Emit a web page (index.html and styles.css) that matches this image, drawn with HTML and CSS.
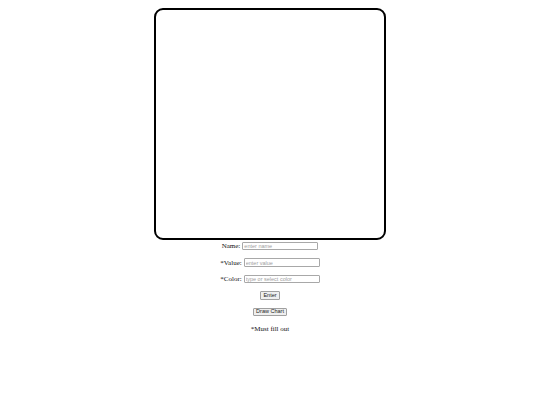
FILE: index.html
```html
<!DOCTYPE html>
<html>
<head>
<meta charset="utf-8">
<link rel="stylesheet" href="styles.css">
</head>
<body>
<div class="chart"></div>
<form class="form">
  <div class="row"><label class="lbl">Name:</label><input class="field" type="text" placeholder="enter name"></div>
  <div class="row"><label class="lbl">*Value:</label><input class="field" type="text" placeholder="enter value"></div>
  <div class="row"><label class="lbl">*Color:</label><input class="field" type="text" placeholder="type or select color"></div>
  <div class="row"><button class="btn" type="button">Enter</button></div>
  <div class="row"><button class="btn" type="button">Draw Chart</button></div>
  <div class="row"><span class="note">*Must fill out</span></div>
</form>
</body>
</html>
```
FILE: styles.css
```css
html, body {
  background: #ffffff;
}
body {
  margin: 8px;
  font-family: "Liberation Serif", "Times New Roman", serif;
  font-size: 7px;
  color: #111;
}
.chart {
  width: 232px;
  height: 232px;
  box-sizing: border-box;
  border: 2.5px solid #000;
  border-radius: 9px;
  margin: 0 auto;
}
.form {
  display: flex;
  flex-direction: column;
  align-items: center;
  gap: 6.5px;
  margin-top: 1px;
}
.row {
  height: 10px;
  display: flex;
  align-items: center;
  justify-content: center;
  gap: 2px;
}
.lbl {
  font-size: 7px;
}
.field {
  width: 76px;
  height: 8.5px;
  box-sizing: border-box;
  border: 1px solid #a8a8a8;
  border-radius: 1px;
  padding: 0 1px;
  font-family: "Liberation Sans", Arial, sans-serif;
  font-size: 5.5px;
  margin: 0;
  background: #fff;
}
.field::placeholder {
  color: #a0a0a0;
}
.btn {
  font-family: "Liberation Sans", Arial, sans-serif;
  font-size: 5.5px;
  height: 8.5px;
  padding: 0 2px;
  margin: 0;
  border: 1px solid #a0a0a0;
  border-radius: 1px;
  background: #efefef;
  color: #222;
  line-height: 1;
}
.note {
  font-size: 7px;
}
```
